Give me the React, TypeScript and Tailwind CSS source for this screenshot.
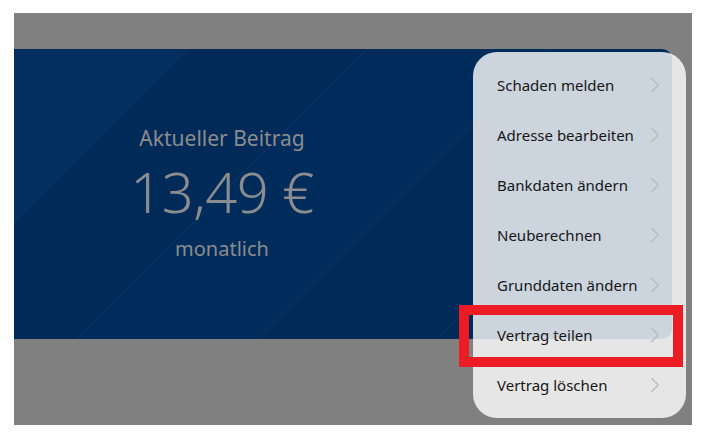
import { ChevronRight } from 'lucide-react';

const menuItems = [
  'Schaden melden',
  'Adresse bearbeiten',
  'Bankdaten ändern',
  'Neuberechnen',
  'Grunddaten ändern',
  'Vertrag teilen',
  'Vertrag löschen',
];

// decorative diagonal stripes on the premium card
function CardStripes() {
  const starts = [173, 353, 533, 713];
  return (
    <svg className="absolute inset-0 h-full w-full" viewBox="0 0 658 290" preserveAspectRatio="none">
      <polygon points="0,0 173,0 0,173" fill="#002e5f" />
      <polygon points="353,0 533,0 243,290 63,290" fill="#002c5b" />
      {starts.map((x) => (
        <line key={x} x1={x} y1={0} x2={x - 290} y2={290} stroke="#0b3767" strokeWidth={1} />
      ))}
    </svg>
  );
}

export default function App() {
  return (
    <div className="min-h-[434px] w-[705px] bg-white pt-[13px] pb-[9px] pl-[14px] pr-[13px]" style={{ fontFamily: '"Noto Sans", "Open Sans", sans-serif' }}>
      <div className="relative h-[412px] bg-[#808080] pt-[36px]">
        {/* Beitrag card */}
        <div className="relative flex h-[290px] w-[658px] overflow-hidden rounded-r-[10px] bg-[#002a58]">
          <CardStripes />
          <div className="relative flex w-[416px] flex-col items-center pt-[75px] text-[#8a8c90]">
            <div className="text-[21px] leading-[28px]">Aktueller Beitrag</div>
            <div className="mt-[11px] text-[56px] font-light leading-[56px] tracking-[-0.5px]">13,49 €</div>
            <div className="mt-[16px] text-[20px] leading-[28px]">monatlich</div>
          </div>
        </div>

        {/* Aktionen menu */}
        <div className="absolute left-[459px] top-[39px] w-[213px] rounded-[24px] bg-white/80 py-[8px]">
          {menuItems.map((item) => (
            <div key={item} className="flex h-[50px] items-center justify-between pl-[24px] pr-[18px]">
              <span className="text-[15px] text-[#161616]">{item}</span>
              <ChevronRight className="h-[26px] w-[26px] text-[#b6bbc3]" strokeWidth={1.2} />
            </div>
          ))}
        </div>

        {/* highlight */}
        <div className="absolute left-[445px] top-[292px] h-[62px] w-[224px] border-[10px] border-[#ed1c24]" />
      </div>
    </div>
  );
}
